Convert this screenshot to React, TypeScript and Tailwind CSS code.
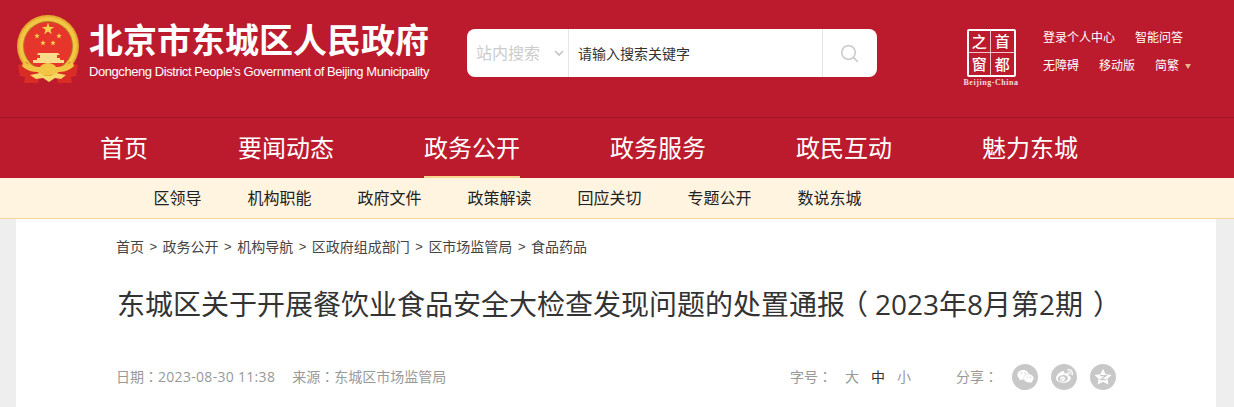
import { FaWeibo, FaWeixin } from 'react-icons/fa';

const cjk = "font-['Open_Sans','Noto_Sans_CJK_SC','Liberation_Sans',sans-serif]";

const navItems = ['首页', '要闻动态', '政务公开', '政务服务', '政民互动', '魅力东城'];
const subNavItems = ['区领导', '机构职能', '政府文件', '政策解读', '回应关切', '专题公开', '数说东城'];
const crumbs = ['首页', '政务公开', '机构导航', '区政府组成部门', '区市场监管局', '食品药品'];

const starPoints = (cx: number, cy: number, r: number) => {
  const pts: string[] = [];
  for (let i = 0; i < 10; i++) {
    const rad = i % 2 === 0 ? r : r * 0.4;
    const a = (Math.PI / 5) * i - Math.PI / 2;
    pts.push(`${(cx + rad * Math.cos(a)).toFixed(2)},${(cy + rad * Math.sin(a)).toFixed(2)}`);
  }
  return pts.join(' ');
};

const Emblem = () => (
  <svg width="66" height="70" viewBox="0 0 66 70" className="shrink-0">
    <circle cx="32" cy="31" r="31" fill="#e5ab2e" />
    <circle cx="32" cy="31" r="29" fill="#f2c545" />
    <circle cx="32" cy="31" r="25" fill="#b67a20" />
    <circle cx="32" cy="31" r="24" fill="#e6352a" />
    <polygon points={starPoints(32, 14, 6.5)} fill="#f6cf4f" />
    <polygon points={starPoints(21, 21, 3)} fill="#f6cf4f" />
    <polygon points={starPoints(43, 21, 3)} fill="#f6cf4f" />
    <polygon points={starPoints(27, 28, 3)} fill="#f6cf4f" />
    <polygon points={starPoints(37, 28, 3)} fill="#f6cf4f" />
    <path d="M22 38h20l2 2h-3v3h3v2h4v3H17v-3h4v-2h3v-3h-3z" fill="#f8dc8a" />
    <path d="M2 50l8-3 14 12-2 9H8l1-6-5-1z" fill="#d92c25" />
    <path d="M62 50l-8-3-14 12 2 9h14l-1-6 5-1z" fill="#d92c25" />
    <path d="M8 46c5 5 12 6 16 6 2-3 5-4 8-4s6 1 8 4c4 0 11-1 16-6l2 5c-5 5-11 6-16 6l-4 3-6-1-6 1-4-3c-5 0-11-1-16-6z" fill="#f2c545" />
    <path d="M14 60l10-2 5 3h6l5-3 10 2-5 4-6-1-6 4-6-4-7 1z" fill="#f6d768" />
  </svg>
);

const CapitalLogo = () => (
  <div className="flex flex-col items-center w-[54px] shrink-0 mt-[7px]">
    <div className="w-[49px] h-[48px] border-[2px] border-white rounded-[2px] grid grid-cols-2 grid-rows-2 text-white text-[15px] font-medium leading-none">
      <span className="flex items-center justify-center border-r border-b border-[#eec6cb]">之</span>
      <span className="flex items-center justify-center border-b border-[#eec6cb]">首</span>
      <span className="flex items-center justify-center border-r border-[#eec6cb]">窗</span>
      <span className="flex items-center justify-center">都</span>
    </div>
    <span className="mt-[1px] text-[8px] leading-[10px] font-bold tracking-[0.55px] whitespace-nowrap text-[#f5dcdf] font-['Liberation_Serif',serif]">
      Beijing-China
    </span>
  </div>
);

const QzoneIcon = () => (
  <svg width="18" height="18" viewBox="0 0 18 18">
    <path d="M9 .8l2.500 5.400 6 .7-4.100 3.800 1 5.700L9 13.800l-5.400 2.600 1-5.700L.5 6.900l6-.7z" fill="#fff" />
    <path d="M6 7.600h6L7 11.600h5.400" fill="none" stroke="#c8c8c8" strokeWidth="1.300" />
  </svg>
);

// full-width colon sits in the middle of its cell in the reference
const Colon = () => <span className="font-['Noto_Sans_CJK_TC',sans-serif]">：</span>;

export default function App() {
  return (
    <div className={`h-[407px] w-[1234px] overflow-hidden bg-[#eeeeee] ${cjk}`}>
      <header className="bg-[#bc1b2e] h-[118px] border-b border-[#a01526] flex">
        <div className="ml-[16px] mt-[15px]">
          <Emblem />
        </div>
        <div className="ml-[7px] mt-[17px] w-[345px]">
          <h1 className="text-[34px] leading-[46px] font-bold text-white whitespace-nowrap">北京市东城区人民政府</h1>
          <p className="text-[13px] leading-[16px] mt-[1px] text-white whitespace-nowrap tracking-[-0.43px] font-['Liberation_Sans',sans-serif]">
            Dongcheng District People's Government of Beijing Municipality
          </p>
        </div>
        <div className="ml-[33px] mt-[29px] w-[410px] h-[48px] bg-white rounded-[8px] flex items-stretch">
          <div className="w-[102px] border-r border-[#e5e5e5] flex items-center pl-[9px] text-[16px] text-[#cccccc]">
            <span>站内搜索</span>
            <svg width="10" height="7" viewBox="0 0 10 7" className="ml-[14px]">
              <path d="M1 1l4 4 4-4" fill="none" stroke="#c4c4c4" strokeWidth="1.600" />
            </svg>
          </div>
          <div className="flex-1 flex items-center pl-[9px] text-[14px] text-[#333333]">请输入搜索关键字</div>
          <div className="w-[55px] border-l border-[#e5e5e5] flex items-center justify-center pr-[2px]">
            <svg width="19" height="19" viewBox="0 0 19 19">
              <circle cx="8.500" cy="8.500" r="6.800" fill="none" stroke="#cfcfcf" strokeWidth="1.800" />
              <path d="M13.500 13.500l4.300 4.300" stroke="#cfcfcf" strokeWidth="1.800" />
            </svg>
          </div>
        </div>
        <div className="ml-[87px] mt-[22px]">
          <CapitalLogo />
        </div>
        <div className="ml-[25px] mt-[30px] text-white text-[12px] leading-[16px]">
          <div className="flex gap-[20px] whitespace-nowrap">
            <span>登录个人中心</span>
            <span>智能问答</span>
          </div>
          <div className="flex gap-[20px] mt-[12px] whitespace-nowrap items-center">
            <span>无障碍</span>
            <span>移动版</span>
            <span className="flex items-center">
              简繁
              <span className="ml-[6px] mt-[1px] w-0 h-0 border-x-[3px] border-x-transparent border-t-[5px] border-t-[#e0b98a]" />
            </span>
          </div>
        </div>
      </header>

      <nav className="bg-[#bc1b2e] h-[60px] flex pl-[100px] gap-[90px] text-[24px] text-white">
        {navItems.map((item) => (
          <a
            key={item}
            className={`h-[60px] leading-[60px] whitespace-nowrap border-b-[2px] ${
              item === '政务公开' ? 'border-[#fad590]' : 'border-transparent'
            }`}
          >
            {item}
          </a>
        ))}
      </nav>

      <div className="bg-[#fef4df] h-[41px] border-b border-[#f8d69a] flex pl-[154px] gap-[46px] text-[16px] leading-[41px] text-[#222222]">
        {subNavItems.map((item) => (
          <a key={item} className="whitespace-nowrap -translate-x-[0.5px]">
            {item}
          </a>
        ))}
      </div>

      <main className="ml-[16px] w-[1200px] h-[188px] bg-white pl-[100px] pr-[100px]">
        <div className="pt-[18px] flex items-center text-[14px] leading-[20px] text-[#444444] whitespace-nowrap">
          {crumbs.map((c, i) => (
            <span key={c} className="flex items-center">
              {i > 0 && <span className="w-[18.6px] text-center font-['Liberation_Sans',sans-serif] text-[13px]">&gt;</span>}
              {c}
            </span>
          ))}
        </div>
        <h2 className="mt-[27px] ml-[1px] flex text-[28px] leading-[40px] font-normal text-[#333333] whitespace-nowrap">
          <span>东城区关于开展餐饮业食品安全大检查发现问题的处置通报</span>
          <span className="ml-[9px] mr-[7px] [font-feature-settings:'halt']">（</span>
          <span>2023年8月第2期</span>
          <span className="ml-[10px] [font-feature-settings:'halt']">）</span>
        </h2>
        <div className="mt-[39px] flex items-center justify-between text-[14px] leading-[26px] text-[#999999] whitespace-nowrap">
          <div className="flex gap-[17px]">
            <span>日期<Colon /><span className="tracking-[0.3px]">2023-08-30 11:38</span></span>
            <span>来源<Colon />东城区市场监管局</span>
          </div>
          <div className="flex items-center">
            <span className="w-[55px]">字号<Colon /></span>
            <span>大</span>
            <span className="ml-[12px] text-[#333333]">中</span>
            <span className="ml-[12px]">小</span>
            <span className="ml-[45px] w-[56px]">分享<Colon /></span>
            <span className="w-[26px] h-[26px] rounded-full bg-[#c8c8c8] flex items-center justify-center text-white text-[17px]">
              <FaWeixin />
            </span>
            <span className="ml-[13px] w-[26px] h-[26px] rounded-full bg-[#c8c8c8] flex items-center justify-center text-white text-[17px]">
              <FaWeibo />
            </span>
            <span className="ml-[13px] w-[26px] h-[26px] rounded-full bg-[#c8c8c8] flex items-center justify-center">
              <QzoneIcon />
            </span>
          </div>
        </div>
      </main>
    </div>
  );
}
